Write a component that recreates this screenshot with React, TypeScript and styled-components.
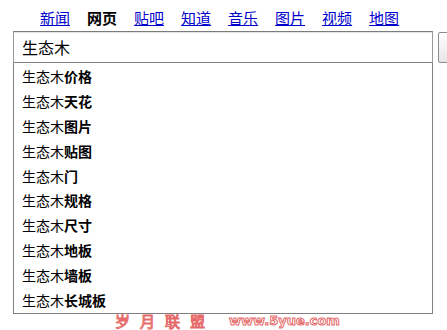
import styled, { createGlobalStyle } from 'styled-components';

const GlobalStyle = createGlobalStyle`
  html, body {
    margin: 0;
    padding: 0;
    background: #ffffff;
    font-family: "Liberation Sans", "Noto Sans CJK SC", sans-serif;
  }
`;

const navItems = ['新闻', '网页', '贴吧', '知道', '音乐', '图片', '视频', '地图'];

const suggestions = ['价格', '天花', '图片', '贴图', '门', '规格', '尺寸', '地板', '墙板', '长城板'];

const App = () => {
  return (
    <Page>
      <GlobalStyle />
      <Nav>
        {navItems.map((item) => (
          <NavLink key={item} $active={item === '网页'}>
            {item}
          </NavLink>
        ))}
      </Nav>
      <SearchRow>
        <Field>
          <Input>生态木</Input>
          <Dropdown>
            {suggestions.map((s) => (
              <Row key={s}>
                生态木<b>{s}</b>
              </Row>
            ))}
          </Dropdown>
        </Field>
        <SubmitButton />
      </SearchRow>
      <Watermark>
        <span className='cn'>岁月联盟</span>
        <span className='en'>www.5yue.com</span>
      </Watermark>
    </Page>
  );
};

export default App;

const Page = styled.div`
  width: 447px;
  height: 330px;
  overflow: hidden;
`;

const Nav = styled.div`
  display: flex;
  gap: 17px;
  padding: 9px 0 0 40px;
  height: 22px;
  font-size: 15px;
  line-height: 18px;
  font-family: "Noto Sans CJK SC", sans-serif;
`;

const NavLink = styled.a<{ $active?: boolean }>`
  color: ${(p) => (p.$active ? '#000000' : '#0000cc')};
  text-decoration: ${(p) => (p.$active ? 'none' : 'underline')};
  font-weight: ${(p) => (p.$active ? 'bold' : 'normal')};
  cursor: pointer;
`;

const SearchRow = styled.div`
  display: flex;
  align-items: flex-start;
  padding-left: 13px;
`;

const Field = styled.div`
  width: 420px;
  flex-shrink: 0;
`;

const Input = styled.div`
  box-sizing: border-box;
  height: 32px;
  border: 1px solid #9a9a9a;
  border-top-color: #7b7b7b;
  border-bottom-color: #817f82;
  box-shadow: inset 0 1px 0 #e4e4e4;
  padding: 0 8px;
  font-family: "Noto Sans CJK SC", sans-serif;
  font-size: 16px;
  line-height: 30px;
  color: #000;
`;

const Dropdown = styled.div`
  box-sizing: border-box;
  border: 1px solid #817f82;
  border-top: none;
  padding-top: 1px;
`;

const Row = styled.div`
  height: 24.9px;
  line-height: 24px;
  padding-left: 8px;
  font-family: "Noto Sans CJK SC", sans-serif;
  font-size: 14px;
  color: #000;

  b {
    font-weight: bold;
  }
`;

const SubmitButton = styled.div`
  box-sizing: border-box;
  margin: 1px 0 0 5px;
  width: 70px;
  height: 31px;
  flex-shrink: 0;
  border: 1px solid #8e8e8e;
  border-radius: 2px;
  background: linear-gradient(#ffffff, #e6e6e6);
`;

const Watermark = styled.div`
  display: flex;
  align-items: center;
  gap: 14px;
  padding-left: 115px;
  height: 15px;
  margin-top: -1px;
  color: #ffffff;
  -webkit-text-stroke: 1px #e66a6a;

  .cn {
    font-family: "Noto Sans CJK SC", sans-serif;
    font-size: 15px;
    letter-spacing: 10px;
    line-height: 15px;
  }

  .en {
    font-family: "DejaVu Sans", sans-serif;
    font-weight: bold;
    font-size: 13px;
    line-height: 15px;
  }
`;
